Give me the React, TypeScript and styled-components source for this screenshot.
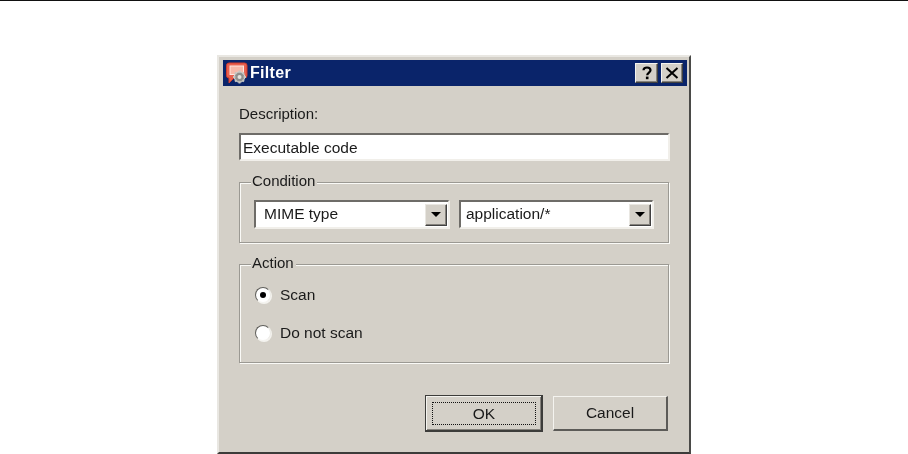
import React from "react";
import styled, { createGlobalStyle } from "styled-components";

const Global = createGlobalStyle`
  html, body { margin: 0; padding: 0; background: #fff; }
  body { font-family: "Liberation Sans", Arial, sans-serif; overflow: hidden; }
`;

const Page = styled.div`
  width: 908px;
  height: 454px;
  box-sizing: border-box;
  border-top: 1px solid #111;
  padding: 54px 0 0 217px;
  overflow: hidden;
`;

const Win = styled.div`
  width: 474px;
  height: 399px;
  box-sizing: border-box;
  background: #d4d0c8;
  border-style: solid;
  border-width: 2px;
  border-color: #e9e7e2 #4a4a48 #3c3c3a #e9e7e2;
  padding: 3px 2px 0 4px;
  color: #1a1a1a;
  font-size: 15.5px;
  filter: blur(0.35px);
`;

const TitleBar = styled.div`
  height: 26px;
  background: #0a246a;
  display: flex;
  align-items: center;
  padding: 0 4px 0 3px;
  gap: 2px;
`;

const Title = styled.span`
  flex: 1;
  color: #fff;
  font-weight: 700;
  font-size: 16px;
  letter-spacing: 0.3px;
`;

const CapButton = styled.div<{ $w: number; $gap?: number }>`
  width: ${(p) => p.$w}px;
  height: 20px;
  box-sizing: border-box;
  margin-left: ${(p) => p.$gap ?? 0}px;
  background: #d4d0c8;
  border-style: solid;
  border-width: 1px;
  border-color: #f4f3ef #404040 #404040 #f4f3ef;
  box-shadow: inset -1px -1px 0 #85827c;
  display: flex;
  align-items: center;
  justify-content: center;
`;

const Body = styled.div`
  padding: 9px 0 0 16px;
`;

const Label = styled.div`
  height: 17px;
  line-height: 17px;
  font-size: 15px;
  margin: 10px 0 11px;
`;

const Sunken = styled.div`
  box-sizing: border-box;
  background: #fff;
  border-style: solid;
  border-width: 2px 1px 1px 2px;
  border-color: #6e6c68 #f1efea #f1efea #6e6c68;
  box-shadow: 1px 1px 0 #f1efea;
`;

const TextBox = styled(Sunken)`
  width: 430px;
  height: 27px;
  line-height: 25px;
  padding-left: 2px;
`;

const Group = styled.div<{ $h: number; $mt: number }>`
  position: relative;
  box-sizing: border-box;
  width: 430px;
  height: ${(p) => p.$h}px;
  margin-top: ${(p) => p.$mt}px;
  border: 1px solid #9b9993;
  box-shadow: 1px 1px 0 #fafaf7, inset 1px 1px 0 #fafaf7;
`;

const Legend = styled.span`
  position: absolute;
  left: 11px;
  top: -11px;
  height: 17px;
  line-height: 17px;
  font-size: 15px;
  padding: 0 2px 0 1px;
  background: #d4d0c8;
`;

const ComboRow = styled.div`
  display: flex;
  gap: 10px;
  padding: 17px 0 0 14px;
`;

const Combo = styled(Sunken)<{ $w: number }>`
  width: ${(p) => p.$w}px;
  height: 28px;
  display: flex;
  align-items: center;
  padding-left: 2px;
  padding-right: 1px;
`;

const ComboText = styled.span<{ $pad: number }>`
  flex: 1;
  padding-left: ${(p) => p.$pad}px;
  padding-bottom: 1px;
`;

const Arrow = styled.div`
  width: 22px;
  height: 22px;
  box-sizing: border-box;
  background: #d4d0c8;
  border-style: solid;
  border-width: 1px;
  border-color: #e9e7e2 #404040 #404040 #e9e7e2;
  box-shadow: inset -1px -1px 0 #85827c;
  display: flex;
  align-items: center;
  justify-content: center;
  &::after {
    content: "";
    border-style: solid;
    border-width: 5px 5px 0 5px;
    border-color: #000 transparent transparent transparent;
  }
`;

const RadioRow = styled.div<{ $mt: number }>`
  display: flex;
  align-items: center;
  gap: 9px;
  height: 20px;
  margin-top: ${(p) => p.$mt}px;
  padding-left: 15px;
`;

const RadioDot = styled.div<{ $on?: boolean }>`
  width: 16px;
  height: 16px;
  flex: none;
  box-sizing: border-box;
  border-radius: 50%;
  background: #fff;
  border: 1.5px solid;
  border-color: #5f5e5a #ecebe6 #f4f3ef #5f5e5a;
  box-shadow: 1px 1px 0 #f4f3ef;
  display: flex;
  align-items: center;
  justify-content: center;
  &::after {
    content: "";
    width: 6px;
    height: 6px;
    border-radius: 50%;
    background: ${(p) => (p.$on ? "#000" : "transparent")};
  }
`;

const Footer = styled.div`
  width: 430px;
  box-sizing: border-box;
  display: flex;
  justify-content: flex-end;
  align-items: center;
  gap: 10px;
  margin-top: 32px;
  padding-right: 1px;
`;

const DefaultButton = styled.div`
  width: 118px;
  height: 37px;
  box-sizing: border-box;
  border: 1px solid #3c3c3a;
  border-width: 1px 2px 2px 1px;
  background: #d4d0c8;
  box-shadow: inset 1px 1px 0 #f4f3ef, inset -1px -1px 0 #85827c;
  padding: 6px 5px 5px 6px;
  display: flex;
`;

const FocusRing = styled.div`
  flex: 1;
  border: 1px dotted #111;
  display: flex;
  align-items: center;
  justify-content: center;
`;

const PlainButton = styled.div`
  width: 115px;
  height: 35px;
  box-sizing: border-box;
  border-style: solid;
  border-width: 1px 2px 2px 1px;
  border-color: #f4f3ef #5c5b58 #5c5b58 #f4f3ef;
  background: #d4d0c8;
  display: flex;
  align-items: center;
  justify-content: center;
`;

const AppIcon = () => (
  <svg width="22" height="23" viewBox="0 0 22 23" style={{ flex: "none" }}>
    <path
      d="M3 1h15.5a2.5 2.5 0 0 1 2.5 2.5v10a2.5 2.5 0 0 1-2.5 2.5H8l-5 5v-5a2.5 2.5 0 0 1-2.5-2.5v-10A2.5 2.5 0 0 1 3 1z"
      fill="#e8604f"
      stroke="#d13b2c"
    />
    <rect x="4" y="4" width="13.5" height="8.5" fill="#f7b8a9" stroke="#fde8e2" />
    <circle cx="13.5" cy="15" r="5.2" fill="#9d9d9b" stroke="#d9d9d5" />
    <path
      d="M13.5 8.5v13M7 15h13M9 10.5l9 9M18 10.5l-9 9"
      stroke="#c6c6c2"
      strokeWidth="2"
    />
    <circle cx="13.5" cy="15" r="4.2" fill="#8f8f8d" />
    <circle cx="13.5" cy="15" r="2" fill="#e4e4e0" />
  </svg>
);

export default function App() {
  return (
    <>
      <Global />
      <Page>
        <Win>
          <TitleBar>
            <AppIcon />
            <Title>Filter</Title>
            <CapButton $w={23}>
              <svg width="12" height="14" viewBox="0 0 12 14">
                <path
                  d="M2.5 4.2C2.5 2.4 4 1.5 6 1.5s3.5 1 3.5 2.8c0 2.2-3.3 2.4-3.3 5"
                  fill="none"
                  stroke="#000"
                  strokeWidth="2.2"
                />
                <rect x="4.9" y="10.6" width="2.6" height="2.6" fill="#000" />
              </svg>
            </CapButton>
            <CapButton $w={22} $gap={1}>
              <svg width="14" height="12" viewBox="0 0 14 12">
                <path d="M1.5 1 12.5 11M12.5 1 1.5 11" stroke="#000" strokeWidth="2" />
              </svg>
            </CapButton>
          </TitleBar>
          <Body>
            <Label>Description:</Label>
            <TextBox>Executable code</TextBox>
            <Group $h={61} $mt={22}>
              <Legend>Condition</Legend>
              <ComboRow>
                <Combo $w={195}>
                  <ComboText $pad={6}>MIME type</ComboText>
                  <Arrow />
                </Combo>
                <Combo $w={194}>
                  <ComboText $pad={3}>application/*</ComboText>
                  <Arrow />
                </Combo>
              </ComboRow>
            </Group>
            <Group $h={99} $mt={21}>
              <Legend>Action</Legend>
              <RadioRow $mt={20}>
                <RadioDot $on />
                <span>Scan</span>
              </RadioRow>
              <RadioRow $mt={18}>
                <RadioDot />
                <span>Do not scan</span>
              </RadioRow>
            </Group>
            <Footer>
              <DefaultButton>
                <FocusRing>OK</FocusRing>
              </DefaultButton>
              <PlainButton>Cancel</PlainButton>
            </Footer>
          </Body>
        </Win>
      </Page>
    </>
  );
}
